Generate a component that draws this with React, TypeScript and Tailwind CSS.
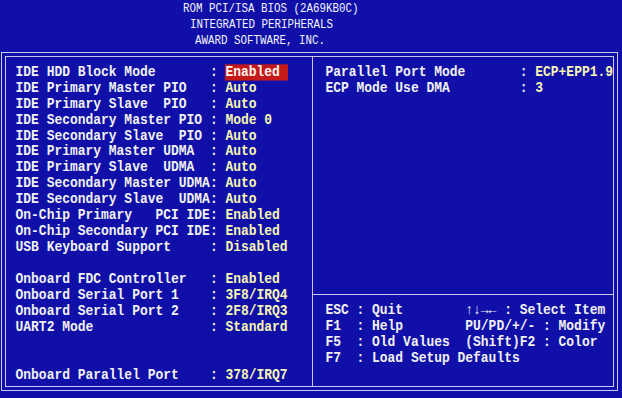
import React from "react";

type Row = { label: string; value: string; hl?: boolean } | null;

const leftRows: Row[] = [
  { label: "IDE HDD Block Mode", value: "Enabled", hl: true },
  { label: "IDE Primary Master PIO", value: "Auto" },
  { label: "IDE Primary Slave  PIO", value: "Auto" },
  { label: "IDE Secondary Master PIO", value: "Mode 0" },
  { label: "IDE Secondary Slave  PIO", value: "Auto" },
  { label: "IDE Primary Master UDMA", value: "Auto" },
  { label: "IDE Primary Slave  UDMA", value: "Auto" },
  { label: "IDE Secondary Master UDMA", value: "Auto" },
  { label: "IDE Secondary Slave  UDMA", value: "Auto" },
  { label: "On-Chip Primary   PCI IDE", value: "Enabled" },
  { label: "On-Chip Secondary PCI IDE", value: "Enabled" },
  { label: "USB Keyboard Support", value: "Disabled" },
  null,
  { label: "Onboard FDC Controller", value: "Enabled" },
  { label: "Onboard Serial Port 1", value: "3F8/IRQ4" },
  { label: "Onboard Serial Port 2", value: "2F8/IRQ3" },
  { label: "UART2 Mode", value: "Standard" },
  null,
  null,
  { label: "Onboard Parallel Port", value: "378/IRQ7" },
];

const rightRows: Row[] = [
  { label: "Parallel Port Mode", value: "ECP+EPP1.9" },
  { label: "ECP Mode Use DMA", value: "3" },
];

const help = [
  "ESC : Quit        \u2191\u2193\u2192\u2190 : Select Item",
  "F1  : Help        PU/PD/+/- : Modify",
  "F5  : Old Values  (Shift)F2 : Color",
  "F7  : Load Setup Defaults",
];

function Line({ row }: { row: Row }) {
  if (!row) return <div className="h-[15.95px]" />;
  return (
    <div className="h-[15.95px] flex items-center whitespace-pre">
      <div className="leading-[14px] scale-y-[1.08]">
        <span className="text-[#f2f2f2]">{row.label.padEnd(25, " ")}</span>
        <span className="text-[#f2f2f2]">: </span>
        {row.hl ? (
          <span className="bg-[#c41a1a] text-[#fff4f0]">{row.value + " "}</span>
        ) : (
          <span className="text-[#f6f6b4]">{row.value}</span>
        )}
      </div>
    </div>
  );
}

function HeadLine({ text, ml }: { text: string; ml: string }) {
  return (
    <div className="h-[16px] flex items-center whitespace-pre">
      <div className={`${ml} leading-[12px] scale-y-[1.2]`}>{text}</div>
    </div>
  );
}

export default function App() {
  return (
    <div className="w-[622px] h-[398px] bg-[#1010a8] overflow-hidden font-['Liberation_Mono',monospace] text-[12.96px] font-bold">
      <div className="h-[52px] text-[10.83px] font-normal text-[#f4f4fc]">
        <HeadLine text="ROM PCI/ISA BIOS (2A69KB0C)" ml="ml-[183px]" />
        <HeadLine text="INTEGRATED PERIPHERALS" ml="ml-[190px]" />
        <HeadLine text="AWARD SOFTWARE, INC." ml="ml-[195px]" />
      </div>
      <div className="ml-[1px] w-[617px] h-[339px] border border-[#c8c8f0] p-[3px]">
        <div className="h-full border border-[#c8c8f0] flex">
          <div className="w-[307px] pl-[9.55px] pt-[7.8px]">
            {leftRows.map((r, i) => (
              <Line key={i} row={r} />
            ))}
          </div>
          <div className="w-px bg-[#c8c8f0]" />
          <div className="flex-1 flex flex-col">
            <div className="h-[237px] pl-[12.55px] pt-[7.8px]">
              {rightRows.map((r, i) => (
                <Line key={i} row={r} />
              ))}
            </div>
            <div className="h-px bg-[#c8c8f0]" />
            <div className="pl-[12.55px] pt-[8.5px] text-[#f2f2f2]">
              {help.map((h, i) => (
                <div key={i} className="h-[15.95px] flex items-center whitespace-pre">
                  <div className="leading-[14px] scale-y-[1.08]">{h}</div>
                </div>
              ))}
            </div>
          </div>
        </div>
      </div>
    </div>
  );
}
